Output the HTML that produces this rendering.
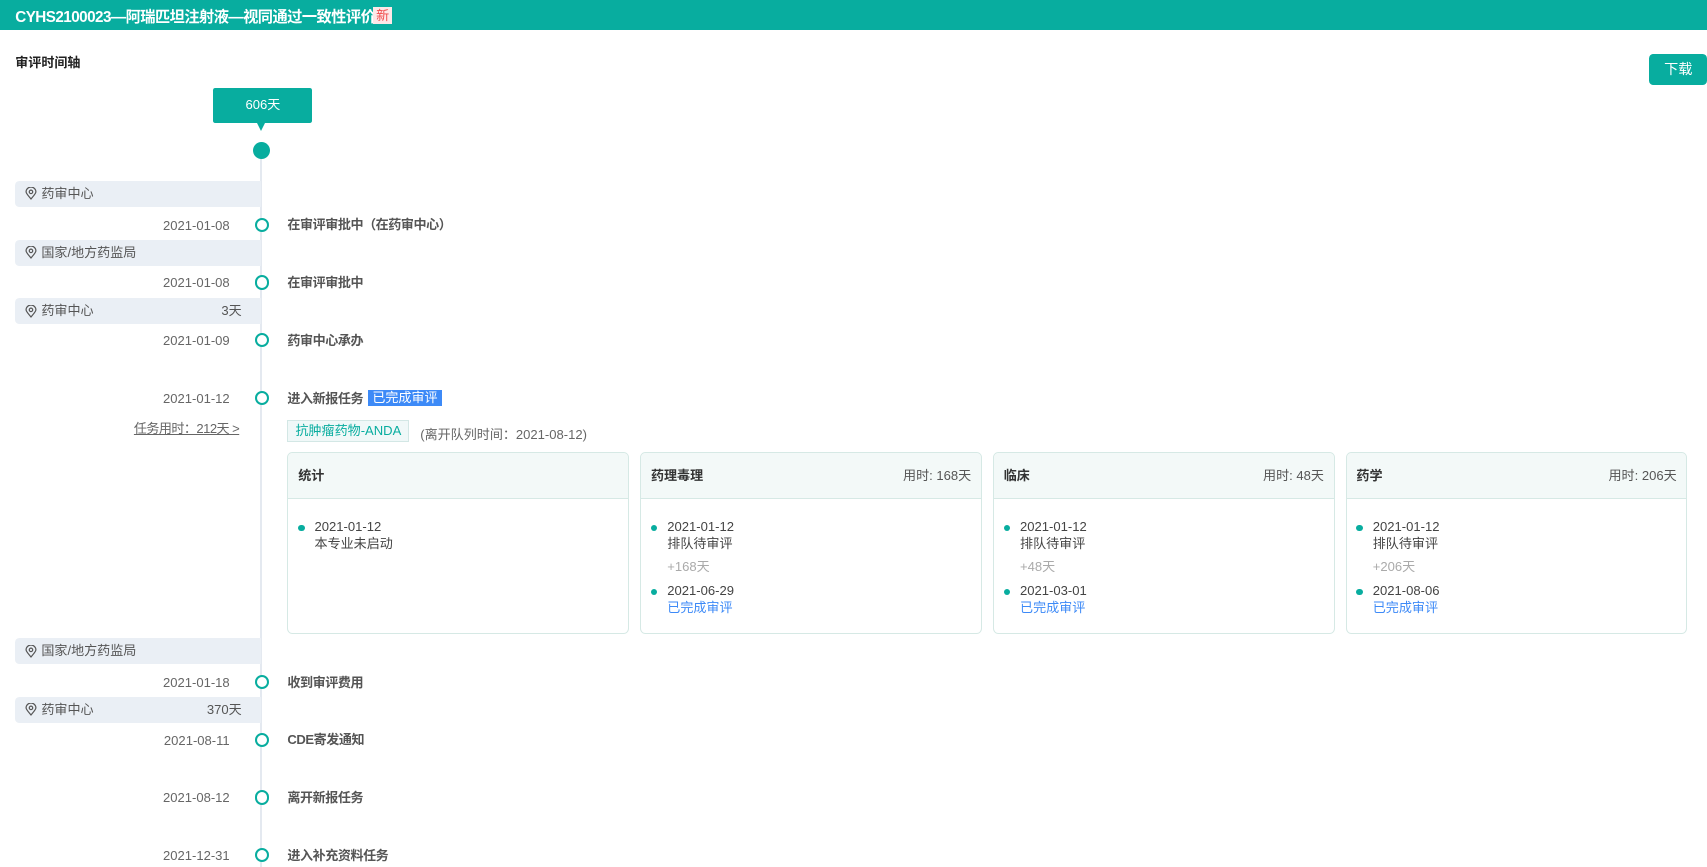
<!DOCTYPE html>
<html><head><meta charset="utf-8"><style>
*{box-sizing:border-box;margin:0;padding:0}
html,body{width:1707px;height:867px;overflow:hidden;background:#fff}
body{font-family:"Liberation Sans","Noto Sans CJK SC",sans-serif;color:#333}
#w{zoom:1.0887;width:1568px;height:797px;position:relative}
.a{position:absolute;white-space:nowrap}
.hdr{left:0;top:0;width:1568px;height:28px;background:#08ad9f}
.loc{left:14px;width:226px;height:24px;background:#eaeff5;border-radius:4px 0 0 4px;font-size:12px;color:#555;line-height:24px;padding-left:24px}
.loc svg{position:absolute;left:9px;top:6px}
.loc .d{position:absolute;right:18px;top:0}
.dt{font-size:12px;color:#666;width:100px;text-align:right;left:111px}
.c{width:13px;height:13px;border:2px solid #08ad9f;border-radius:50%;background:#fff;left:234px}
.lb{left:264px;font-size:12px;font-weight:bold;color:#555;letter-spacing:-0.4px}
.card{top:415px;width:314px;height:167px;border:1px solid #d6e9e5;border-radius:5px;overflow:hidden}
.card .h{height:42px;background:#f3f9f8;border-bottom:1px solid #d6e9e5;font-size:12px;font-weight:bold;color:#333;line-height:42px;padding:0 9px;position:relative}
.card .h span{position:absolute;right:9px;font-weight:normal;color:#555}
.it{position:absolute;left:24px;font-size:12px;color:#444;line-height:15px}
.dot{position:absolute;left:9px;width:6px;height:6px;border-radius:50%;background:#08ad9f}
.g{color:#aaa}.b{color:#3d8af7}
</style></head><body><div id="w">
<div class="a hdr"></div>
<div class="a" style="left:14px;top:5px;font-size:14px;font-weight:bold;color:#fff;letter-spacing:-0.5px">CYHS2100023—阿瑞匹坦注射液—视同通过一致性评价</div>
<div class="a" style="left:343px;top:6px;width:17px;height:16px;background:#fde8e8;color:#f04d4d;font-size:12px;text-align:center;line-height:16px">新</div>
<div class="a" style="left:14px;top:48px;font-size:12px;font-weight:bold;color:#222">审评时间轴</div>
<div class="a" style="left:1515px;top:50px;width:53px;height:28px;background:#08ad9f;border-radius:4px;color:#fff;font-size:13px;text-align:center;line-height:28px">下载</div>
<div class="a" style="left:196px;top:81px;width:91px;height:32px;background:#08ad9f;border-radius:2px;color:#fff;font-size:12px;text-align:center;line-height:32px">606天</div>
<div class="a" style="left:236px;top:113px;width:0;height:0;border-left:4px solid transparent;border-right:4px solid transparent;border-top:8px solid #08ad9f"></div>
<div class="a" style="left:239px;top:138px;width:2px;height:659px;background:#e4e9f0"></div>
<div class="a" style="left:232px;top:130px;width:16px;height:16px;border-radius:50%;background:#08ad9f"></div>

<div class="a loc" style="top:166px"><svg width="11" height="12" viewBox="0 0 11 12"><path d="M5.5 11C3 8 1 6 1 4.5a4.5 4.5 0 0 1 9 0C10 6 8 8 5.5 11z" fill="none" stroke="#555" stroke-width="1.1"/><circle cx="5.5" cy="4.5" r="1.6" fill="none" stroke="#555" stroke-width="1.1"/></svg>药审中心</div>
<div class="a loc" style="top:220px"><svg width="11" height="12" viewBox="0 0 11 12"><path d="M5.5 11C3 8 1 6 1 4.5a4.5 4.5 0 0 1 9 0C10 6 8 8 5.5 11z" fill="none" stroke="#555" stroke-width="1.1"/><circle cx="5.5" cy="4.5" r="1.6" fill="none" stroke="#555" stroke-width="1.1"/></svg>国家/地方药监局</div>
<div class="a loc" style="top:274px"><svg width="11" height="12" viewBox="0 0 11 12"><path d="M5.5 11C3 8 1 6 1 4.5a4.5 4.5 0 0 1 9 0C10 6 8 8 5.5 11z" fill="none" stroke="#555" stroke-width="1.1"/><circle cx="5.5" cy="4.5" r="1.6" fill="none" stroke="#555" stroke-width="1.1"/></svg>药审中心<span class="d">3天</span></div>
<div class="a loc" style="top:586px"><svg width="11" height="12" viewBox="0 0 11 12"><path d="M5.5 11C3 8 1 6 1 4.5a4.5 4.5 0 0 1 9 0C10 6 8 8 5.5 11z" fill="none" stroke="#555" stroke-width="1.1"/><circle cx="5.5" cy="4.5" r="1.6" fill="none" stroke="#555" stroke-width="1.1"/></svg>国家/地方药监局</div>
<div class="a loc" style="top:640px"><svg width="11" height="12" viewBox="0 0 11 12"><path d="M5.5 11C3 8 1 6 1 4.5a4.5 4.5 0 0 1 9 0C10 6 8 8 5.5 11z" fill="none" stroke="#555" stroke-width="1.1"/><circle cx="5.5" cy="4.5" r="1.6" fill="none" stroke="#555" stroke-width="1.1"/></svg>药审中心<span class="d">370天</span></div>

<div class="a dt" style="top:200px">2021-01-08</div><div class="a c" style="top:200px"></div><div class="a lb" style="top:197px">在审评审批中（在药审中心）</div>
<div class="a dt" style="top:253px">2021-01-08</div><div class="a c" style="top:253px"></div><div class="a lb" style="top:250px">在审评审批中</div>
<div class="a dt" style="top:306px">2021-01-09</div><div class="a c" style="top:306px"></div><div class="a lb" style="top:303px">药审中心承办</div>
<div class="a dt" style="top:359px">2021-01-12</div><div class="a c" style="top:359px"></div><div class="a lb" style="top:356px">进入新报任务</div>
<div class="a" style="left:338px;top:358px;height:15px;padding:0 4px;background:#3d8af7;color:#fff;font-size:12px;line-height:15px">已完成审评</div>
<div class="a" style="left:123px;top:384px;font-size:12px;color:#666;text-decoration:underline;letter-spacing:-0.5px">任务用时：212天 &gt;</div>
<div class="a" style="left:264px;top:386px;width:112px;height:20px;background:#f0f8f8;border:1px solid #d3e7e5;color:#08ad9f;font-size:12px;line-height:18px;text-align:center">抗肿瘤药物-ANDA</div>
<div class="a" style="left:386px;top:389px;font-size:12px;color:#666">(离开队列时间：2021-08-12)</div>

<div class="a card" style="left:264px"><div class="h">统计</div>
<div class="dot" style="top:66px"></div><div class="it" style="top:61px">2021-01-12<br>本专业未启动</div></div>
<div class="a card" style="left:588px"><div class="h">药理毒理<span>用时: 168天</span></div>
<div class="dot" style="top:66px"></div><div class="it" style="top:61px">2021-01-12<br>排队待审评</div>
<div class="it g" style="top:98px">+168天</div>
<div class="dot" style="top:125px"></div><div class="it" style="top:120px">2021-06-29<br><span class="b">已完成审评</span></div></div>
<div class="a card" style="left:912px"><div class="h">临床<span>用时: 48天</span></div>
<div class="dot" style="top:66px"></div><div class="it" style="top:61px">2021-01-12<br>排队待审评</div>
<div class="it g" style="top:98px">+48天</div>
<div class="dot" style="top:125px"></div><div class="it" style="top:120px">2021-03-01<br><span class="b">已完成审评</span></div></div>
<div class="a card" style="left:1236px"><div class="h">药学<span>用时: 206天</span></div>
<div class="dot" style="top:66px"></div><div class="it" style="top:61px">2021-01-12<br>排队待审评</div>
<div class="it g" style="top:98px">+206天</div>
<div class="dot" style="top:125px"></div><div class="it" style="top:120px">2021-08-06<br><span class="b">已完成审评</span></div></div>

<div class="a dt" style="top:620px">2021-01-18</div><div class="a c" style="top:620px"></div><div class="a lb" style="top:617px">收到审评费用</div>
<div class="a dt" style="top:673px">2021-08-11</div><div class="a c" style="top:673px"></div><div class="a lb" style="top:670px">CDE寄发通知</div>
<div class="a dt" style="top:726px">2021-08-12</div><div class="a c" style="top:726px"></div><div class="a lb" style="top:723px">离开新报任务</div>
<div class="a dt" style="top:779px">2021-12-31</div><div class="a c" style="top:779px"></div><div class="a lb" style="top:776px">进入补充资料任务</div>
</div></body></html>
